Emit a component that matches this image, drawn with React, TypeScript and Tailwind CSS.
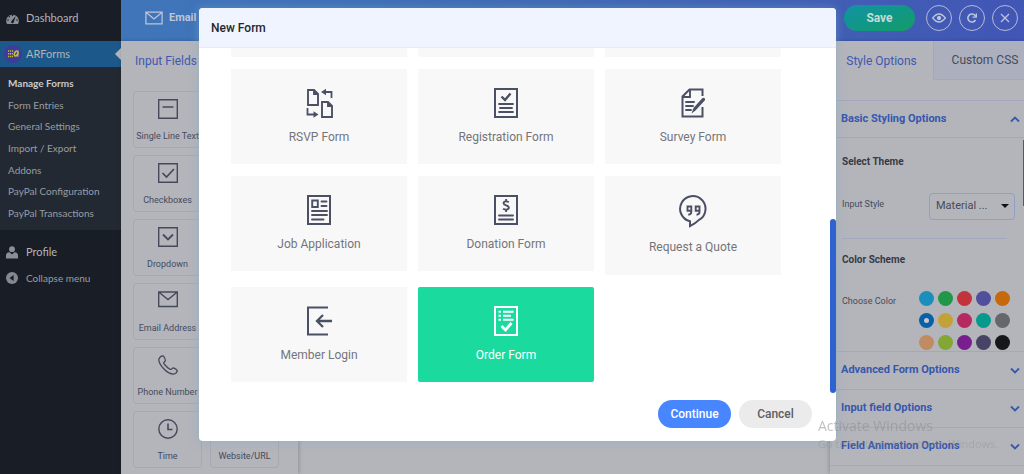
import React from "react";

type IconProps = { className?: string };

const Svg = ({ className, children, box = "0 0 24 30" }: { className?: string; children: React.ReactNode; box?: string }) => (
  <svg aria-hidden="true" viewBox={box} className={className} fill="none" stroke="currentColor" strokeWidth="2">
    {children}
  </svg>
);

const RsvpIcon = () => (
  <Svg box="0 0 27 30" className="h-[30px] w-[27px]">
    <path d="M2 2h6l4 4v11H2zM8 2v4h4M16 14h6l4 4v11H16zM22 14v4h4" strokeWidth="1.9" />
    <path d="M25.500 10V4h-7M1.500 20v6.500h7" strokeWidth="1.8" />
    <path d="M20 .8v6.400L15 4zM7.500 23.300v6.400l5-3.200z" fill="currentColor" stroke="none" />
  </Svg>
);
const RegistrationIcon = () => (
  <Svg className="h-[30px] w-6">
    <path d="M1 1h22v28H1z" />
    <path d="M7.500 8.500l3.500 3.500 5.500-6.500" strokeWidth="2.400" />
    <path d="M5 16h14M6 20h12M5 24h14" strokeWidth="1.800" strokeLinecap="round" />
  </Svg>
);
const SurveyIcon = () => (
  <Svg className="h-[30px] w-6">
    <path d="M21.500 8V1.500H8.500L1.500 8.500V28.500H21.500V19" />
    <path d="M9 1.500V9H1.500" strokeWidth="1.900" />
    <path d="M5 14h8M5 18h7M5 22h5" strokeWidth="1.900" strokeLinecap="round" />
    <path d="M10.500 25.500l2-5.500L21 10.500q1.700-1.500 2.700-.2t-.4 2.600L14.500 22.500z" fill="currentColor" stroke="none" />
  </Svg>
);
const JobIcon = () => (
  <Svg className="h-[30px] w-6">
    <path d="M1 1h22v28H1z" />
    <path d="M5.200 5.500h5.600v6.500H5.200z" strokeWidth="1.900" />
    <path d="M14.500 6.500h5M14.500 11h5M5 16h15M5 20h15M5 24.500h11.500" strokeWidth="1.900" strokeLinecap="round" />
  </Svg>
);
const DonationIcon = () => (
  <Svg className="h-[30px] w-6">
    <path d="M1 1h22v28H1z" />
    <path d="M14.800 7.300C13.500 6.200 9.600 5.700 9.600 8.300c0 2.600 5.200 1.600 5.200 4.300 0 2.700-4.200 2.300-5.700 1M12.100 4v2.500M12.100 14v3" strokeWidth="1.900" />
    <path d="M5 20.500h14M5 24.500h14" strokeWidth="1.900" strokeLinecap="round" />
  </Svg>
);
const QuoteIcon = () => (
  <Svg box="0 0 28 33" className="h-[33px] w-7">
    <path d="M11 26.200A12.700 12.700 0 1 1 20 24.900Q17 28 11 31.200z" strokeWidth="2" />
    <path d="M8.500 11.500h3.800v4.300H8.500zM12.300 11.500v5.500q0 2.500-3 2.800M16.700 11.500h3.800v4.300h-3.800zM20.500 11.500v5.500q0 2.500-3 2.800" strokeWidth="1.900" />
  </Svg>
);
const LoginIcon = () => (
  <Svg box="0 0 27 30" className="h-[30px] w-[27px]">
    <path d="M22 1.500H2V28.500H22" />
    <path d="M26 15H12M17 9l-6 6 6 6" strokeWidth="2.300" />
  </Svg>
);
const OrderIcon = () => (
  <Svg className="h-[30px] w-6">
    <path d="M1 1h22v28H1z" />
    <path d="M4.500 5.800h2.500M9 5.800h10.500M4.500 9.800h2.500M9 9.800h8M4.500 13.800h2.500M9 13.800h10.500" strokeWidth="2" />
    <path d="M7.500 20l4 4 6-7" strokeWidth="2.700" />
  </Svg>
);

const cards: { label: string; icon: () => React.ReactElement; tall?: boolean; active?: boolean }[] = [
  { label: "RSVP Form", icon: RsvpIcon },
  { label: "Registration Form", icon: RegistrationIcon },
  { label: "Survey Form", icon: SurveyIcon },
  { label: "Job Application", icon: JobIcon },
  { label: "Donation Form", icon: DonationIcon },
  { label: "Request a Quote", icon: QuoteIcon, tall: true },
  { label: "Member Login", icon: LoginIcon },
  { label: "Order Form", icon: OrderIcon, active: true },
];

const EnvelopeIcon = ({ className }: IconProps) => (
  <Svg box="0 0 20 15" className={className}>
    <path d="M1 1h18v13H1zM1 1l9 7.500L19 1" strokeWidth="1.400" />
  </Svg>
);

const fieldClass = "h-5 w-5";
const fields: { label: string; icon: React.ReactNode }[][] = [
  [
    { label: "Single Line Text", icon: <Svg box="0 0 20 20" className={fieldClass}><path d="M.700.700h18.600v18.600H.700zM4.500 8h11" strokeWidth="1.400" /></Svg> },
  ],
  [
    { label: "Checkboxes", icon: <Svg box="0 0 20 20" className={fieldClass}><path d="M.700.700h18.600v18.600H.700z" strokeWidth="1.400" /><path d="M4.500 10l4 4L16 6" strokeWidth="1.700" /></Svg> },
  ],
  [
    { label: "Dropdown", icon: <Svg box="0 0 20 20" className={fieldClass}><path d="M.700.700h18.600v18.600H.700z" strokeWidth="1.400" /><path d="M5 7.500l5 5 5-5" strokeWidth="1.900" /></Svg> },
  ],
  [
    { label: "Email Address", icon: <Svg box="0 0 20 20" className={fieldClass}><path d="M.700 1h18.600v14.500H.700zM.700 1L10 8.500 19.300 1" strokeWidth="1.400" /></Svg> },
  ],
  [
    { label: "Phone Number", icon: <Svg box="0 0 20 20" className={fieldClass}><path d="M4.700.900Q2.400.900.900 4 .400 8 5.500 13.500T15.500 19.200Q18.700 18.500 19.300 15.600 19 14.500 15.300 12.900 14.500 12.800 13.200 14.400 12 15 8.500 11.500T5.800 7.600L7.200 6Q7.600 4 5.500 1.200z" strokeWidth="1.300" strokeLinejoin="round" /></Svg> },
  ],
  [
    { label: "Time", icon: <Svg box="0 0 20 20" className={fieldClass}><circle cx="10" cy="10" r="9.200" strokeWidth="1.400" /><path d="M10 4.500v6h4.500" strokeWidth="1.600" /></Svg> },
    { label: "Website/URL", icon: <Svg box="0 0 20 20" className={fieldClass}><circle cx="10" cy="10" r="9.200" strokeWidth="1.400" /><path d="M1 10h18M10 1q-8 9 0 18q8-9 0-18" strokeWidth="1.300" /></Svg> },
  ],
];

const swatches = [
  { name: "Sky", bg: "bg-[#1b8fbb]" },
  { name: "Green", bg: "bg-[#20984a]" },
  { name: "Red", bg: "bg-[#c2333b]" },
  { name: "Indigo", bg: "bg-[#504f9e]" },
  { name: "Orange", bg: "bg-[#c5690c]" },
  { name: "Blue", bg: "bg-[#0860a8]", on: true },
  { name: "Yellow", bg: "bg-[#c2a137]" },
  { name: "Pink", bg: "bg-[#b62a60]" },
  { name: "Teal", bg: "bg-[#06998d]" },
  { name: "Gray", bg: "bg-[#66676c]" },
  { name: "Peach", bg: "bg-[#c08b61]" },
  { name: "Lime", bg: "bg-[#82a734]" },
  { name: "Purple", bg: "bg-[#791e8f]" },
  { name: "Slate", bg: "bg-[#464464]" },
  { name: "Black", bg: "bg-[#16171b]" },
];

const submenu = ["Manage Forms", "Form Entries", "General Settings", "Import / Export", "Addons", "PayPal Configuration", "PayPal Transactions"];

const Chevron = ({ up }: { up?: boolean }) => (
  <Svg box="0 0 10 7" className="h-[7px] w-[10px]">
    <path d={up ? "M1 5.500l4-4 4 4" : "M1 1.500l4 4 4-4"} strokeWidth="1.800" />
  </Svg>
);

function Sidebar() {
  return (
    <nav aria-label="Admin" className="w-[121px] shrink-0 bg-[#191e26] font-['Lato',sans-serif] text-[#b1b4b8]">
      <a href="#dashboard" className="flex h-[41px] items-center gap-[7px] pb-1 pl-1.5 text-[11px]">
        <svg aria-hidden="true" viewBox="0 0 13 12" className="h-3 w-[13px]">
          <path d="M1 11A6.300 6.300 0 1 1 12 11z" fill="#8c9095" />
          <g fill="#191e26"><circle cx="6.500" cy="2.500" r=".8" /><circle cx="3.300" cy="3.800" r=".8" /><circle cx="2" cy="7" r=".8" /><circle cx="11" cy="7" r=".8" /><path d="M5.300 8.300L9.800 3 7.700 9.200a1.300 1.300 0 1 1-2.400-.9z" /></g>
        </svg>
        Dashboard
      </a>
      <a href="#arforms" className="flex h-[26px] items-center bg-[#1c5889] pl-1 text-[11px]">
        <svg aria-hidden="true" viewBox="0 0 18 18" className="h-[18px] w-[18px]">
          <circle cx="9" cy="9" r="9" fill="#403a9c" />
          <path d="M4 6h5.500M4 8.800h5M4 11.500h5" stroke="#c0b93a" strokeWidth="1.500" strokeDasharray="1.300 .7" />
          <path d="M14.300 6.300q-3.500-1-4 3.200q.2 3 3 .2l1-3.400-.8 5.400" fill="none" stroke="#c9c036" strokeWidth="1.500" />
        </svg>
        <span className="flex-1 pl-1">ARForms</span>
        <svg aria-hidden="true" viewBox="0 0 6 12" className="h-3 w-1.5"><path d="M6 0v12L0 6z" fill="#b4b5bb" /></svg>
      </a>
      <ul className="flex h-[163px] flex-col bg-[#222932] pt-[6px] pb-[6px] text-[10px] text-[#989da3]">
        {submenu.map((s, i) => (
          <li key={s} className="flex flex-1 items-center">
            <a href="#sub" className={i === 0 ? "pl-2 font-bold text-[#c8cacd]" : "pl-2"}>{s}</a>
          </li>
        ))}
      </ul>
      <a href="#profile" className="mt-[9px] flex h-[26px] items-center gap-2 pl-1.5 text-[11px]">
        <svg aria-hidden="true" viewBox="0 0 12 13" className="h-[13px] w-3" fill="#8c9095"><circle cx="6" cy="3.200" r="2.900" /><path d="M0 12.500V9.500q0-3 3.500-3.200L6 8.500l2.500-2.200Q12 6.500 12 9.500v3z" /></svg>
        Profile
      </a>
      <button type="button" className="flex h-[26px] items-center gap-2 pl-1.5 text-[10px] text-[#989da3]">
        <svg aria-hidden="true" viewBox="0 0 12 12" className="h-3 w-3"><circle cx="6" cy="6" r="6" fill="#85898f" /><path d="M7.600 3v6L3.500 6z" fill="#191e26" /></svg>
        Collapse menu
      </button>
    </nav>
  );
}

const roundButton = "flex h-[26px] w-[26px] items-center justify-center rounded-full border border-[#b6bad6]";

function TopBar() {
  return (
    <header className="flex h-[41px] items-center bg-linear-to-r from-[#3f76b9] via-[#3f69b4] to-[#4256b5] pr-1.5 pb-[5px] pl-6 text-[#bec5d9]">
      <EnvelopeIcon className="h-[14px] w-[18px]" />
      <span className="flex-1 pl-1.5 text-[11px] font-bold">Email Marketing</span>
      <button type="button" className="h-[26px] w-[71px] rounded-full bg-linear-to-br from-[#1592a6] to-[#159b65] text-[12px] font-bold text-[#c4dcd6]">Save</button>
      <div className="ml-[11px] flex gap-[7px]">
        <button type="button" aria-label="Preview" className={roundButton}>
          <Svg box="0 0 14 10" className="h-[10px] w-[14px]"><path d="M.700 5Q7-3 13.300 5 7 13 .700 5z" strokeWidth="1.400" /><circle cx="7" cy="5" r="1.700" fill="currentColor" strokeWidth="1" /></Svg>
        </button>
        <button type="button" aria-label="Reset" className={roundButton}>
          <Svg box="0 0 10 10" className="h-[10px] w-[10px]"><path d="M8.400 7A4 4 0 1 1 7.500 2L9 3.500" strokeWidth="1.600" /><path d="M9.300.400v3.700H5.500" strokeWidth="1.400" /></Svg>
        </button>
        <button type="button" aria-label="Close" className={roundButton}>
          <Svg box="0 0 10 10" className="h-[10px] w-[10px]"><path d="M1 1l8 8M9 1L1 9" strokeWidth="1.300" /></Svg>
        </button>
      </div>
    </header>
  );
}

function FieldsPanel() {
  return (
    <section className="w-[177px] shrink-0 pl-[12px] shadow-[1px_0_4px_rgba(0,0,0,0.2)]">
      <h2 className="flex h-[39px] items-center pl-0.5 text-[12px] text-[#4058b0]">Input Fields</h2>
      <div className="mt-[11px] flex flex-col gap-[7px] text-[#444a5c]">
        {fields.map((row) => (
          <div key={row[0].label} className="flex gap-2">
            {row.map((f) => (
              <button key={f.label} type="button" className="flex h-[57px] w-[69px] flex-col items-center justify-between rounded border border-[#a7a9b0] pt-[7px] pb-[5px] text-[9px] leading-3 whitespace-nowrap">
                {f.icon}
                <span>{f.label}</span>
              </button>
            ))}
          </div>
        ))}
      </div>
    </section>
  );
}

const sectionClass = "flex w-full items-center justify-between border-t border-[#a3a8bf] pr-1 pl-[11px] text-[11px] font-bold text-[#3657ac]";

function StylePanel() {
  return (
    <aside className="w-[194px] shrink-0 shadow-[-1px_0_4px_rgba(0,0,0,0.2)]">
      <div role="tablist" className="flex h-[39px] text-[12px]">
        <button type="button" role="tab" aria-selected="true" className="w-[103px] text-[#4058b0]">Style Options</button>
        <button type="button" role="tab" aria-selected="false" className="flex-1 border-b border-l border-[#a3a8bf] bg-[#abafbe] pl-3 whitespace-nowrap text-[#474b58]">Custom CSS</button>
      </div>
      <button type="button" className={`${sectionClass} mt-5 h-[38px] border-b`}>Basic Styling Options<Chevron up /></button>
      <div className="h-[213px] pt-4 pl-3 text-[9px] text-[#474b58]">
        <h3 className="text-[10px] leading-4 font-bold text-[#363a45]">Select Theme</h3>
        <div className="mt-[23px] flex items-center justify-between pr-[9px]">
          <label htmlFor="input-style" className="pb-1">Input Style</label>
          <div className="relative w-[86px]">
            <select id="input-style" className="h-[27px] w-full appearance-none rounded-sm border border-[#8f9fc6] bg-transparent pl-1.5 text-[11px]">
              <option>Material ...</option>
            </select>
            <svg aria-hidden="true" viewBox="0 0 8 4" className="pointer-events-none absolute top-[11px] right-[6px] h-1 w-2"><path d="M0 0h8L4 4z" fill="#101114" /></svg>
          </div>
        </div>
        <hr className="mt-[18px] mr-[17px] border-[#a3a8bf]" />
        <h3 className="mt-[13px] text-[10px] leading-4 font-bold text-[#363a45]">Color Scheme</h3>
        <div className="mt-[23px] flex items-start justify-between pr-[14px]">
          <span className="pt-0.5 leading-4">Choose Color</span>
          <div className="grid grid-cols-5 gap-x-1 gap-y-[7px]">
            {swatches.map((s) => (
              <button key={s.name} type="button" aria-label={s.name} className={`${s.bg} flex h-[15px] w-[15px] items-center justify-center rounded-full`}>
                {s.on && <span className="h-[5px] w-[5px] rounded-full bg-[#c3c7d0]" />}
              </button>
            ))}
          </div>
        </div>
      </div>
      {["Advanced Form Options", "Input field Options", "Field Animation Options"].map((s) => (
        <button key={s} type="button" className={`${sectionClass} h-[38px]`}>{s}<Chevron /></button>
      ))}
      <div className="border-t border-[#a3a8bf]" />
    </aside>
  );
}

function NewFormDialog() {
  return (
    <div role="dialog" aria-labelledby="dialog-title" className="relative w-[637px] overflow-hidden rounded bg-white">
      <h1 id="dialog-title" className="flex h-10 items-center border-b border-[#e3ecfb] bg-[#f0f4ff] pl-3 text-[12px] font-medium text-[#25272d]">New Form</h1>
      <div className="grid grid-cols-[repeat(3,176px)] items-start gap-x-[11px] gap-y-3 pb-[18px] pl-8">
        {[0, 1, 2].map((n) => <div key={n} className="h-[9px] bg-[#f8f8f8]" />)}
        {cards.map(({ label, icon: Icon, tall, active }) => (
          <button
            key={label}
            type="button"
            className={`flex flex-col items-center gap-[11px] pt-[19px] text-[12px] leading-4 ${tall ? "h-[99px]" : "h-[95px]"} ${active ? "rounded-[2px] bg-[#1adb9d] text-white" : "bg-[#f8f8f8] text-[#74757a]"}`}
          >
            <span className={active ? "text-white" : "text-[#4b5164]"}><Icon /></span>
            {label}
          </button>
        ))}
      </div>
      <div className="flex justify-end gap-2 pr-6 pb-[13px] text-[12px] font-medium">
        <button type="button" className="h-7 w-[73px] rounded-full bg-[#4786ff] text-white">Continue</button>
        <button type="button" className="h-7 w-[73px] rounded-full bg-[#ebebeb] text-[#5d5e63]">Cancel</button>
      </div>
      <div className="absolute top-[211px] right-0 h-[174px] w-1.5 rounded-full bg-[#2f62cf]" />
    </div>
  );
}

export default function App() {
  return (
    <div className="relative flex h-screen overflow-hidden bg-[#b4b5bb] font-['Roboto',sans-serif]">
      <Sidebar />
      <div className="flex min-w-0 flex-1 flex-col">
        <TopBar />
        <main className="flex min-h-0 flex-1 justify-between">
          <FieldsPanel />
          <StylePanel />
        </main>
      </div>
      <div className="absolute top-[140px] right-0 h-[66px] w-px bg-[#3c5ba5]" />
      <div className="fixed inset-0 flex items-start justify-center pt-2 pl-[11px]">
        <div className="rounded shadow-[0_0_10px_rgba(120,170,200,0.5)]"><NewFormDialog /></div>
      </div>
      <div className="pointer-events-none fixed right-[24px] bottom-[22px] w-[182px] font-['Open_Sans',sans-serif] whitespace-nowrap text-[#8c8d91]/55">
        <p className="text-[14px] leading-5">Activate Windows</p>
        <p className="text-[11px] leading-4 opacity-70">Go to Settings to activate Windows.</p>
      </div>
    </div>
  );
}
